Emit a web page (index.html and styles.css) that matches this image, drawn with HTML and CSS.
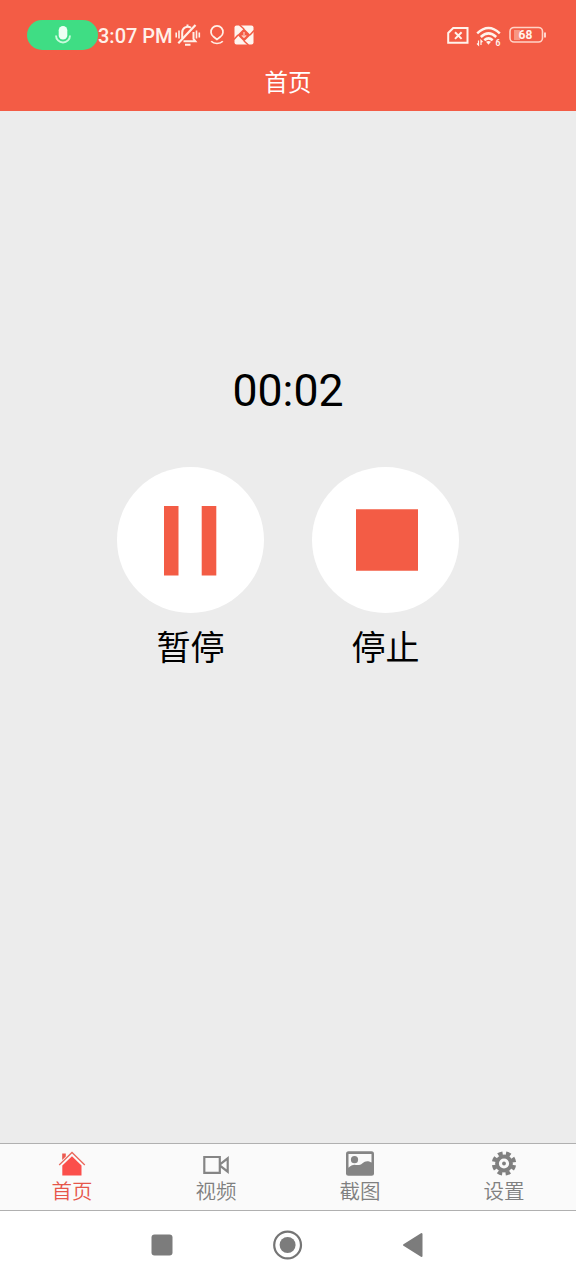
FILE: index.html
```html
<!DOCTYPE html>
<html lang="zh-CN">
<head>
<meta charset="utf-8">
<title>首页</title>
<link rel="stylesheet" href="styles.css">
</head>
<body>
<div class="screen">
  <header class="header">
    <div class="status">
      <div class="status-left">
        <span class="mic-pill">
          <svg width="18" height="20" viewBox="0 0 18 20"><rect x="4.700" y="1" width="8.600" height="13.500" rx="4.300" fill="#edfff4"/><path d="M2 10.500a7 7 0 0 0 14 0" fill="none" stroke="#c8fadb" stroke-width="1.900"/></svg>
        </span>
        <span class="time">3:07 PM</span>
        <svg class="bell" width="26" height="24" viewBox="0 0 26 24" fill="none" stroke="#fff0e8" stroke-width="2"><path d="M7.200 15.500V9.500A5.600 5.600 0 0 1 16 4.800M18.500 9v7l1.800 2.200H8.500M10 21.800h5.500M12.500 1.500v2"/><path d="M3.300 20.300 20.500 2" stroke-width="2.200"/><path d="M1.200 9.500v5M4 7.500v8M21.500 7.500v8M24.300 9.500v5" stroke-width="1.600"/></svg>
        <svg class="pin" width="16" height="20" viewBox="0 0 16 20" fill="none" stroke="#fff0e8" stroke-width="1.700"><path d="M8 14.500 4.600 11.800A6 6 0 1 1 11.400 11.800ZM2.200 16.300q2 2.200 5.800 2.200t5.800-2.200"/></svg>
        <svg class="app" width="20" height="20" viewBox="0 0 20 20"><rect x=".5" y=".5" width="19" height="19" rx="2" fill="#fff5ef"/><path d="M10 4 5.500 0M16 10l4-4.500M10 16l4.500 4M4 10 0 14.500" stroke="#f35c45" stroke-width="1.500"/><path d="m10 3.500 6.500 6.500-6.500 6.500L3.500 10Z" fill="#f35c45"/><path d="M10 7v5.500M7.800 10.300l2.200 2.200 2.200-2.200" fill="none" stroke="#ffd0c3" stroke-width="1.200"/></svg>
      </div>
      <div class="status-right">
        <svg width="22" height="17" viewBox="0 0 22 17" fill="none" stroke="#fff3ec" stroke-width="2"><path d="M6.200 1H20.500V15.800H1.200V6Z"/><path d="m8 5.300 6.600 6.600m0-6.600-6.600 6.600"/></svg>
        <svg class="wifi" width="26" height="24" viewBox="0 -2 26 24" fill="none" stroke="#fff3ec" stroke-width="2.500"><path d="M1.200 7.300q11.300-10.500 22.600 0M4.800 11q7.700-7.200 15.400 0M8.300 14.300q4.200-3.800 8.400 0"/><path d="m10 15.800 2.500 3 2.500-3q-2.500-1.700-5 0Z" fill="#fff3ec" stroke="none"/><path d="M2.500 14.500V19L1 17.500M5 19v-4.500L6.500 16" stroke-width="1.200"/><text x="19.600" y="19.600" class="wifi-num">6</text></svg>
        <svg width="38" height="18" viewBox="0 0 38 18"><path d="M5 4h6v10H5z" fill="#f89783"/><rect x="1" y="1.500" width="32.500" height="14.500" rx="4" fill="none" stroke="#ffd4c7" stroke-width="1.600"/><path d="M36 6.500v5" stroke="#ffe2da" stroke-width="1.800"/><text x="16.500" y="13.200" text-anchor="middle" class="battery-num">68</text></svg>
      </div>
    </div>
    <h1 class="title">首页</h1>
  </header>
  <main class="main">
    <div class="timer">00:02</div>
    <div class="controls">
      <div class="control">
        <div class="circle"><svg width="147" height="147" viewBox="0 0 147 147" fill="#f35c45"><path d="M47 39h14.500v69.500H47zM84.700 39h14.600v69.500H84.700z"/></svg></div>
        <span class="label">暂停</span>
      </div>
      <div class="control">
        <div class="circle"><svg width="147" height="147" viewBox="0 0 147 147" fill="#f35c45"><path d="M44 42.300h62v61.500H44z"/></svg></div>
        <span class="label">停止</span>
      </div>
    </div>
  </main>
  <nav class="tabs">
    <div class="tab active">
      <svg width="28" height="26" viewBox="0 0 28 26"><path d="M14 5.300 23.500 14.500V24.500H4.300V14.500Z" fill="#fb4f4b"/><path d="M1.200 14 14 1.500 26.800 14" fill="none" stroke="#e9685c" stroke-width="1.300"/><path d="M4.200 2.500h3.600v3L4.200 9Z" fill="#ec5a50"/></svg>
      <span>首页</span>
    </div>
    <div class="tab">
      <svg width="28" height="26" viewBox="0 0 28 26" fill="none" stroke="#858585" stroke-width="2.200"><path d="M2.300 6h15.500v15.800H2.300zM18 13.300l7.700-6v13.400l-7.700-6Z"/></svg>
      <span>视频</span>
    </div>
    <div class="tab">
      <svg width="28" height="26" viewBox="0 0 28 26"><rect width="28" height="24.500" y=".3" rx="2.500" fill="#858585"/><path d="M2.500 3h23v8.500c-4-2-6.500-1.300-9 .8-3.500 3-6 1.300-9 1.600-2.200.2-3.500 1.400-5 2.800Z" fill="#fafafa"/><circle cx="8.500" cy="8.700" r="3.600" fill="#858585"/></svg>
      <span>截图</span>
    </div>
    <div class="tab">
      <svg width="28" height="26" viewBox="-14 -12.500 28 26" fill="none" stroke="#808080"><circle r="7" stroke-width="3.800"/><circle r="10.200" stroke-width="4" stroke-dasharray="4.600 3.411" stroke-dashoffset="-1.700"/><circle r="1.900" fill="#808080" stroke="none"/></svg>
      <span>设置</span>
    </div>
  </nav>
  <footer class="system-nav">
    <svg width="22" height="22" viewBox="0 0 22 22"><rect x=".5" y=".5" width="21" height="21" rx="3" fill="#7c7c7c"/></svg>
    <svg width="30" height="30" viewBox="0 0 30 30"><circle cx="14.600" cy="15" r="13.400" fill="none" stroke="#757575" stroke-width="2.200"/><circle cx="14.600" cy="15" r="8" fill="#7c7c7c"/></svg>
    <svg width="22" height="26" viewBox="0 0 22 26"><path d="M19.500 2v22L2 13Z" fill="#7c7c7c" stroke="#7c7c7c" stroke-width="2" stroke-linejoin="round"/></svg>
  </footer>
</div>
</body>
</html>
```
FILE: styles.css
```css
* { box-sizing: border-box; }
body { margin: 0; font-family: Roboto, "Noto Sans CJK SC", sans-serif; }
svg { display: block; flex: none; }
.screen { width: 576px; height: 1280px; display: flex; flex-direction: column; background: #ececec; overflow: hidden; }
.header { height: 111px; background: #f35c45; color: #fff; }
.status { height: 60px; padding: 10px 29px 0 27px; display: flex; justify-content: space-between; }
.status-left, .status-right { height: 50px; display: flex; align-items: center; }
.status-right { gap: 7px; }
.mic-pill { width: 71px; height: 30px; border-radius: 15px; background: #3fdd84; display: flex; align-items: center; justify-content: center; }
.time { width: 77px; font-size: 20px; font-weight: 500; line-height: 30px; white-space: nowrap; color: #fff0e9; padding-top: 2px; }
.pin { margin-left: 8px; }
.app { margin-left: 9px; }
.wifi { margin-top: 1px; overflow: visible; }
.wifi-num { font: 700 8.500px Roboto, sans-serif; fill: #fff3ec; stroke: none; }
.battery-num { font: 700 12px Roboto, sans-serif; fill: #fff3ec; }
.title { margin: 0; padding-top: 1px; text-align: center; font-size: 23.500px; line-height: 44px; font-weight: 400; }
.main { flex: 1; padding-top: 254px; display: flex; flex-direction: column; align-items: center; color: #000; }
.timer { font-size: 44.600px; line-height: 52px; height: 101.500px; }
.controls { display: flex; gap: 48px; }
.control { display: flex; flex-direction: column; align-items: center; }
.circle { width: 147px; height: 146.500px; border-radius: 50%; background: #fff; }
.label { font-size: 34px; line-height: 50px; margin-top: 10px; }
.tabs { height: 68px; border-top: 1px solid #b0b0b0; border-bottom: 1px solid #b0b0b0; background: #fafafa; display: grid; grid-template-columns: repeat(4, 1fr); }
.tab { display: flex; flex-direction: column; align-items: center; gap: 1px; padding-top: 7px; color: #808080; font-size: 20.500px; font-weight: 350; line-height: 28px; }
.tab.active { color: #e6574a; }
.system-nav { height: 69px; background: #fff; display: flex; align-items: center; justify-content: space-between; padding: 0 152px 1px 151px; }
```
